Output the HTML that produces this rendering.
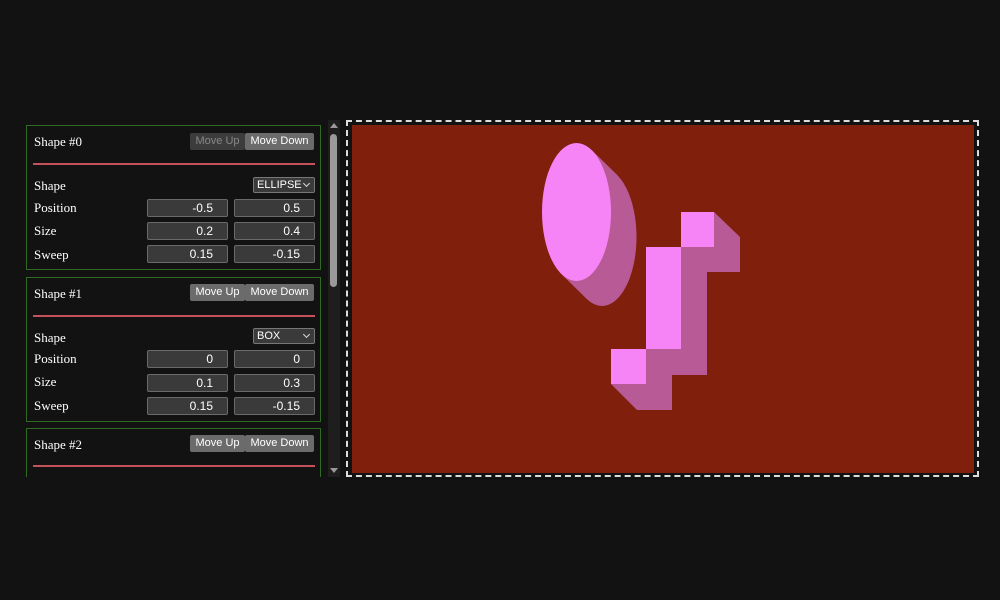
<!DOCTYPE html>
<html><head><meta charset="utf-8"><style>
*{box-sizing:border-box;margin:0;padding:0}
body{width:1000px;height:600px;background:#121212;position:relative;overflow:hidden;font-family:"Liberation Serif",serif;color:#fff}
.card{position:absolute;left:26px;width:295px;border:1px solid #2f6a25;background:#121212}
.t{position:absolute;left:7px;font-size:13px}
.btn{position:absolute;height:17px;font:11px "Liberation Sans",sans-serif;color:#fff;background:#6b6b6b;text-align:center;line-height:17px;border-radius:2px}
.hr{position:absolute;left:6px;width:282px;height:2px;background:#c4525a}
.in{position:absolute;width:81px;height:18px;border:1px solid #6a6a6a;background:#3a3a3a;border-radius:2px;font:12px "Liberation Sans",sans-serif;text-align:right;padding-right:14px;line-height:16px}
.sel{position:absolute;left:226px;width:62px;height:16px;border:1px solid #777;background:#3a3a3a;border-radius:2px;font:11px "Liberation Sans",sans-serif;padding-left:3px;line-height:14px}
.sel:after{content:"";position:absolute;right:5px;top:3px;width:4px;height:4px;border-right:1px solid #ddd;border-bottom:1px solid #ddd;transform:rotate(45deg)}
</style></head><body>
<div class="card" style="top:125px;height:145px">
 <div class="t" style="top:8px">Shape #0</div>
 <div class="btn" style="left:163px;top:7px;width:55px;background:#3c3c3c;color:#888">Move Up</div>
 <div class="btn" style="left:218px;top:7px;width:69px">Move Down</div>
 <div class="hr" style="top:37px"></div>
 <div class="t" style="top:52px">Shape</div><div class="sel" style="top:51px">ELLIPSE</div>
 <div class="t" style="top:74px">Position</div><div class="in" style="left:120px;top:73px">-0.5</div><div class="in" style="left:207px;top:73px">0.5</div>
 <div class="t" style="top:97px">Size</div><div class="in" style="left:120px;top:96px">0.2</div><div class="in" style="left:207px;top:96px">0.4</div>
 <div class="t" style="top:121px">Sweep</div><div class="in" style="left:120px;top:119px">0.15</div><div class="in" style="left:207px;top:119px">-0.15</div>
</div>
<div class="card" style="top:277px;height:145px">
 <div class="t" style="top:8px">Shape #1</div>
 <div class="btn" style="left:163px;top:6px;width:55px">Move Up</div>
 <div class="btn" style="left:218px;top:6px;width:69px">Move Down</div>
 <div class="hr" style="top:37px"></div>
 <div class="t" style="top:52px">Shape</div><div class="sel" style="top:50px">BOX</div>
 <div class="t" style="top:73px">Position</div><div class="in" style="left:120px;top:72px">0</div><div class="in" style="left:207px;top:72px">0</div>
 <div class="t" style="top:96px">Size</div><div class="in" style="left:120px;top:96px">0.1</div><div class="in" style="left:207px;top:96px">0.3</div>
 <div class="t" style="top:120px">Sweep</div><div class="in" style="left:120px;top:119px">0.15</div><div class="in" style="left:207px;top:119px">-0.15</div>
</div>
<div class="card" style="top:428px;height:49px;border-bottom:none">
 <div class="t" style="top:8px">Shape #2</div>
 <div class="btn" style="left:163px;top:6px;width:55px">Move Up</div>
 <div class="btn" style="left:218px;top:6px;width:69px">Move Down</div>
 <div class="hr" style="top:36px"></div>
</div>
<div style="position:absolute;left:328px;top:120px;width:12px;height:357px;background:#1e1e1e"></div>
<div style="position:absolute;left:330px;top:134px;width:7px;height:153px;background:#9a9a9a;border-radius:4px"></div>
<div style="position:absolute;left:330px;top:123px;width:0;height:0;border-left:4px solid transparent;border-right:4px solid transparent;border-bottom:5px solid #9a9a9a"></div>
<div style="position:absolute;left:330px;top:468px;width:0;height:0;border-left:4px solid transparent;border-right:4px solid transparent;border-top:5px solid #9a9a9a"></div>
<div style="position:absolute;left:346px;top:120px;width:633px;height:357px;border:2px dashed #ddd"></div>
<svg style="position:absolute;left:0;top:0" width="1000" height="600">
<rect x="352" y="125" width="622" height="348" fill="#7f1f0c"/>
<g fill="#b85a95">
 <ellipse cx="602" cy="237" rx="34.5" ry="69"/>
 <polygon points="591.7,150 617.2,175 586.8,299 561.3,274"/>
 <polygon points="681,212 714,212 740,237 740,272 707,272 707,375 672,375 672,410 637,410 611,384 611,349 646,349 646,247 681,247"/>
</g>
<g fill="#f784f7">
 <ellipse cx="576.5" cy="212" rx="34.5" ry="69"/>
 <rect x="681" y="212" width="33" height="35"/>
 <rect x="646" y="247" width="35" height="102"/>
 <rect x="611" y="349" width="35" height="35"/>
</g>
</svg>
</body></html>
